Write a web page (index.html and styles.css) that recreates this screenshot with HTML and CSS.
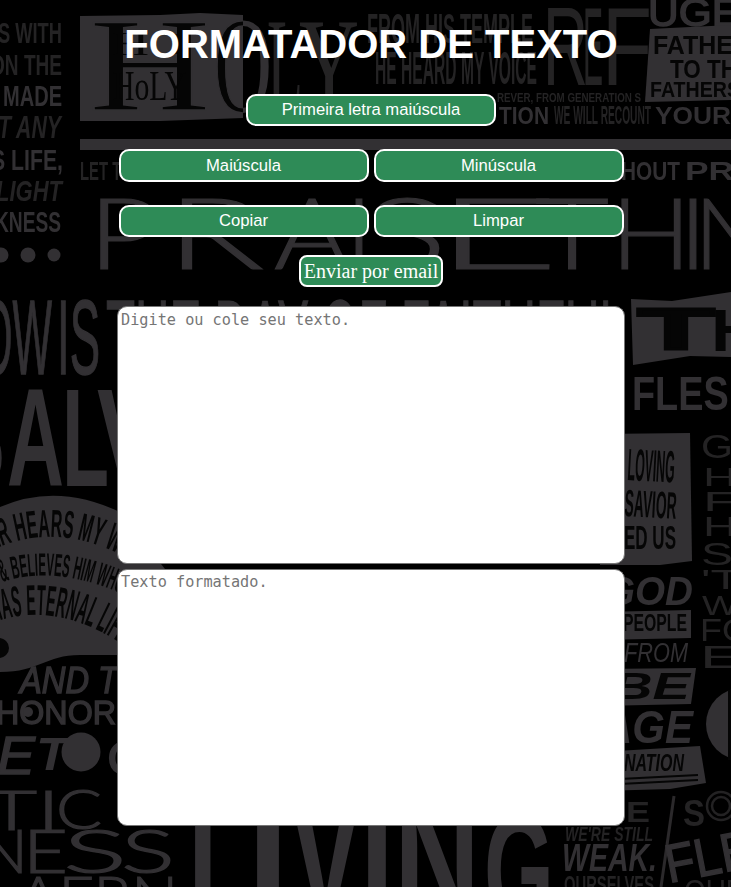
FILE: index.html
```html
<!DOCTYPE html>
<html lang="pt-BR">
<head>
<meta charset="utf-8">
<title>Formatador de texto</title>
<link rel="stylesheet" href="styles.css">
</head>
<body>
<svg class="backdrop" viewBox="0 0 731 887" aria-hidden="true">
  <defs>
    <clipPath id="outside"><rect x="243" y="0" width="200" height="130"/></clipPath>
    <clipPath id="inside"><rect x="80" y="0" width="163" height="130"/></clipPath>
    <path id="arc1" d="M-8 550Q57 520 127 558"/>
    <path id="arc2" d="M2 582Q57 564 127 596"/>
    <path id="arc3" d="M-6 622Q57 600 125 646"/>
  </defs>

  <!-- left column -->
  <g class="cond dim">
    <text x="-2" y="43" font-size="29" textLength="64" lengthAdjust="spacingAndGlyphs">S WITH</text>
    <text x="-10" y="75" font-size="30" textLength="72" lengthAdjust="spacingAndGlyphs">ON THE</text>
    <text x="-2" y="138" font-size="31" textLength="63" lengthAdjust="spacingAndGlyphs" font-style="italic">T ANY</text>
    <text x="-4" y="201" font-size="30" textLength="66" lengthAdjust="spacingAndGlyphs" font-style="italic">LIGHT</text>
    <text x="80" y="180" font-size="26" textLength="52" lengthAdjust="spacingAndGlyphs">LET TH</text>
  </g>
  <g class="cond">
    <text x="3" y="106" font-size="30" textLength="59" lengthAdjust="spacingAndGlyphs">MADE</text>
    <text x="-9" y="170" font-size="30" textLength="72" lengthAdjust="spacingAndGlyphs">S LIFE,</text>
    <text x="-5" y="232" font-size="30" textLength="66" lengthAdjust="spacingAndGlyphs">KNESS</text>
  </g>
  <circle cx="1" cy="255" r="7.5"/><circle cx="28" cy="255" r="7.5"/><circle cx="54" cy="255" r="6.5"/>

  <!-- holy panel -->
  <path d="M80 16L160 15L200 13L243 15V118L160 121H80Z"/>
  <g class="serif ink" clip-path="url(#inside)">
    <text class="slim" x="89" y="110" font-size="133" textLength="122" lengthAdjust="spacingAndGlyphs">H</text>
    <text class="slim" x="214" y="112" font-size="137" textLength="58" lengthAdjust="spacingAndGlyphs">O</text>
    <text x="112" y="55" font-size="33" textLength="74" lengthAdjust="spacingAndGlyphs">HO</text>
    <text x="113" y="100" font-size="42" textLength="73" lengthAdjust="spacingAndGlyphs">HoLY</text>
  </g>
  <g class="serif" clip-path="url(#outside)">
    <text x="214" y="112" font-size="137" textLength="58" lengthAdjust="spacingAndGlyphs">O</text>
    <text class="dim" x="267" y="110" font-size="133" textLength="36" lengthAdjust="spacingAndGlyphs">L</text>
    <text class="dim" x="299" y="110" font-size="133" textLength="60" lengthAdjust="spacingAndGlyphs">Y</text>
  </g>

  <!-- top right -->
  <g class="cond dim">
    <text x="367" y="43" font-size="43" textLength="166" lengthAdjust="spacingAndGlyphs">FROM HIS TEMPLE</text>
    <text x="375" y="84" font-size="47" textLength="162" lengthAdjust="spacingAndGlyphs">HE HEARD MY VOICE</text>
    <text x="497" y="102" font-size="13" textLength="144" lengthAdjust="spacingAndGlyphs">REVER, FROM GENERATION S</text>
    <text x="554" y="124" font-size="25" textLength="97" lengthAdjust="spacingAndGlyphs">WE WILL RECOUNT</text>
  </g>
  <g class="sans dim">
    <text x="543" y="85" font-size="111" textLength="45" lengthAdjust="spacingAndGlyphs">R</text>
    <text x="583" y="85" font-size="111" textLength="20" lengthAdjust="spacingAndGlyphs">E</text>
    <text x="602" y="85" font-size="111" textLength="50" lengthAdjust="spacingAndGlyphs">F</text>
  </g>
  <text class="sans bold" x="648" y="26" font-size="38" textLength="92" lengthAdjust="spacingAndGlyphs">UGE</text>
  <g class="cond">
    <text x="499" y="124" font-size="24" textLength="50" lengthAdjust="spacingAndGlyphs">TION</text>
    <text x="655" y="124" font-size="24" textLength="76" lengthAdjust="spacingAndGlyphs">YOUR</text>
    <text x="621" y="180" font-size="25" textLength="59" lengthAdjust="spacingAndGlyphs">HOUT</text>
    <text x="685" y="180" font-size="25" textLength="49" lengthAdjust="spacingAndGlyphs">PR</text>
  </g>
  <path d="M650 29L731 25V100L645 102Z"/>
  <g class="cond ink">
    <text x="653" y="54" font-size="26" textLength="98" lengthAdjust="spacingAndGlyphs">FATHER</text>
    <text x="670" y="78" font-size="25" textLength="82" lengthAdjust="spacingAndGlyphs">TO THE</text>
    <text x="650" y="97" font-size="22" textLength="90" lengthAdjust="spacingAndGlyphs">FATHERS</text>
  </g>
  <rect x="80" y="139" width="651" height="11"/>

  <g class="thin">
    <text x="88" y="269" font-size="98" textLength="72" lengthAdjust="spacingAndGlyphs">P</text>
    <text x="166" y="269" font-size="98" textLength="98" lengthAdjust="spacingAndGlyphs">R</text>
    <text x="274" y="269" font-size="98" textLength="76" lengthAdjust="spacingAndGlyphs">A</text>
    <text x="345" y="269" font-size="98" textLength="28" lengthAdjust="spacingAndGlyphs">I</text>
    <text x="363" y="269" font-size="98" textLength="84" lengthAdjust="spacingAndGlyphs">S</text>
    <text x="435" y="269" font-size="98" textLength="124" lengthAdjust="spacingAndGlyphs">E</text>
    <text x="535" y="269" font-size="98" textLength="74" lengthAdjust="spacingAndGlyphs">T</text>
    <text x="611" y="269" font-size="98" textLength="80" lengthAdjust="spacingAndGlyphs">H</text>
    <text x="679" y="269" font-size="98" textLength="28" lengthAdjust="spacingAndGlyphs">I</text>
    <text x="694" y="269" font-size="98" textLength="75" lengthAdjust="spacingAndGlyphs">N</text>
  </g>

  <!-- middle left -->
  <g class="sans bold">
    <text x="-20" y="374" font-size="105" textLength="72" lengthAdjust="spacingAndGlyphs">OW</text>
    <text x="57" y="374" font-size="105" textLength="43" lengthAdjust="spacingAndGlyphs">IS</text>
    <text x="106" y="374" font-size="105" textLength="520" lengthAdjust="spacingAndGlyphs">THE DAY OF FAITHFUL</text>
  </g>
  <g class="cond">
    <text x="-52" y="486" font-size="140" textLength="57" lengthAdjust="spacingAndGlyphs">S</text>
    <text x="7" y="486" font-size="140" textLength="57" lengthAdjust="spacingAndGlyphs">A</text>
    <text x="62" y="486" font-size="140" textLength="47" lengthAdjust="spacingAndGlyphs">L</text>
    <text x="97" y="486" font-size="140" textLength="62" lengthAdjust="spacingAndGlyphs">V</text>
  </g>
  <path d="M0 507Q57 482 120 512L165 569V655H80C45 655 40 672 0 672Z"/>
  <circle class="ink" cx="-1" cy="648" r="10"/>
  <g class="cond ink">
    <text font-size="39"><textPath href="#arc1" textLength="130" lengthAdjust="spacingAndGlyphs">ER HEARS MY W</textPath></text>
    <text font-size="32"><textPath href="#arc2" textLength="122" lengthAdjust="spacingAndGlyphs">&amp; BELIEVES HIM WHO</textPath></text>
    <text font-size="43"><textPath href="#arc3" textLength="134" lengthAdjust="spacingAndGlyphs">HAS ETERNAL LIFE</textPath></text>
  </g>
  <g class="sans bold">
    <text x="20" y="693" font-size="36" textLength="98" lengthAdjust="spacingAndGlyphs" font-style="italic">AND T</text>
    <text x="-4" y="724" font-size="33" textLength="120" lengthAdjust="spacingAndGlyphs">HONOR</text>
    <text x="-3" y="774" font-size="54" textLength="38" lengthAdjust="spacingAndGlyphs" font-style="italic">E</text>
    <text x="107" y="775" font-size="48" textLength="38" lengthAdjust="spacingAndGlyphs">C</text>
  </g>
  <text class="cond" x="36" y="770" font-size="46" textLength="32" lengthAdjust="spacingAndGlyphs" font-style="italic">T</text>
  <circle cx="28" cy="712" r="5"/>
  <circle cx="81" cy="752" r="19.5"/>
  <g class="thin">
    <text x="-14" y="830" font-size="56" textLength="74" lengthAdjust="spacingAndGlyphs">TI</text>
    <text x="56" y="829" font-size="56" textLength="46" lengthAdjust="spacingAndGlyphs">C</text>
    <text x="-22" y="873" font-size="61" textLength="50" lengthAdjust="spacingAndGlyphs">N</text>
    <text x="23" y="873" font-size="61" textLength="45" lengthAdjust="spacingAndGlyphs">E</text>
    <text x="63" y="873" font-size="61" textLength="64" lengthAdjust="spacingAndGlyphs">S</text>
    <text x="121" y="873" font-size="61" textLength="54" lengthAdjust="spacingAndGlyphs">S</text>
    <text x="18" y="918" font-size="58" textLength="160" lengthAdjust="spacingAndGlyphs">AFRN</text>
  </g>

  <!-- middle right -->
  <path d="M631 299L672 301L731 292V357L690 356L633 365Z"/>
  <text class="cond ink" x="638" y="349" font-size="58" textLength="76" lengthAdjust="spacingAndGlyphs" stroke="#050505" stroke-width="3">T</text>
  <text class="cond ink" x="711" y="351" font-size="60" textLength="50" lengthAdjust="spacingAndGlyphs">H</text>
  <text class="cond" x="632" y="410" font-size="49" textLength="124" lengthAdjust="spacingAndGlyphs">FLESH</text>
  <path d="M600 434L690 433L692 561L660 565H600Z"/>
  <g class="cond ink">
    <text x="627" y="480" font-size="45" textLength="47" lengthAdjust="spacingAndGlyphs" transform="rotate(3 627 480)">LOVING</text>
    <text x="624" y="516" font-size="38" textLength="52" lengthAdjust="spacingAndGlyphs" transform="rotate(3 624 516)">SAVIOR</text>
    <text x="624" y="549" font-size="33" textLength="52" lengthAdjust="spacingAndGlyphs">ED US</text>
  </g>
  <g class="sans dim">
    <text x="701" y="458" font-size="33" textLength="32" lengthAdjust="spacingAndGlyphs">G</text>
    <text x="703" y="486" font-size="26" textLength="34" lengthAdjust="spacingAndGlyphs">H</text>
    <text x="703" y="511" font-size="28" textLength="34" lengthAdjust="spacingAndGlyphs">F</text>
    <text x="703" y="536" font-size="28" textLength="34" lengthAdjust="spacingAndGlyphs">H</text>
    <text x="701" y="565" font-size="31" textLength="32" lengthAdjust="spacingAndGlyphs">S</text>
    <text x="701" y="589" font-size="27" textLength="40" lengthAdjust="spacingAndGlyphs">'T</text>
    <text x="702" y="615" font-size="28" textLength="36" lengthAdjust="spacingAndGlyphs">W</text>
    <text x="700" y="641" font-size="31" textLength="50" lengthAdjust="spacingAndGlyphs">FO</text>
    <text x="700" y="668" font-size="31" textLength="42" lengthAdjust="spacingAndGlyphs">E</text>
  </g>

  <text class="cond" x="605" y="605" font-size="40" textLength="88" lengthAdjust="spacingAndGlyphs" font-style="italic">GOD</text>
  <path d="M600 612L691 610V638L600 640Z"/>
  <text class="cond ink" x="623" y="631" font-size="23" textLength="64" lengthAdjust="spacingAndGlyphs">PEOPLE</text>
  <text class="sans" x="624" y="662" font-size="27" textLength="64" lengthAdjust="spacingAndGlyphs" font-style="italic">FROM</text>
  <path d="M600 669L696 668L691 704L600 706Z"/>
  <text class="cond ink" x="612" y="699" font-size="36" textLength="78" lengthAdjust="spacingAndGlyphs" font-style="italic">BE</text>
  <text class="cond" x="602" y="743" font-size="46" textLength="91" lengthAdjust="spacingAndGlyphs" font-style="italic">AGE</text>
  <path d="M600 752L700 746L706 783L670 789L600 791Z"/>
  <text class="cond ink" x="624" y="771" font-size="24" textLength="60" lengthAdjust="spacingAndGlyphs" font-style="italic">NATION</text>
  <path class="rule" d="M600 780L698 775M600 785L698 780"/>
  <circle cx="742" cy="724" r="36"/>
  <rect class="ink" x="728" y="690" width="4" height="70"/>

  <!-- bottom -->
  <g class="cond">
    <text x="188" y="920" font-size="180" textLength="65" lengthAdjust="spacingAndGlyphs">L</text>
    <text x="247" y="920" font-size="180" textLength="42" lengthAdjust="spacingAndGlyphs">I</text>
    <text x="290" y="920" font-size="180" textLength="71" lengthAdjust="spacingAndGlyphs">V</text>
    <text x="360" y="920" font-size="180" textLength="34" lengthAdjust="spacingAndGlyphs">I</text>
    <text x="394" y="920" font-size="180" textLength="86" lengthAdjust="spacingAndGlyphs">N</text>
    <text x="484" y="925" font-size="160" textLength="70" lengthAdjust="spacingAndGlyphs">G</text>
    <text x="562" y="871" font-size="39" textLength="95" lengthAdjust="spacingAndGlyphs" font-style="italic">WEAK.</text>
  </g>
  <g class="cond dim">
    <text x="626" y="822" font-size="30" textLength="24" lengthAdjust="spacingAndGlyphs">E</text>
    <text x="565" y="841" font-size="21" textLength="88" lengthAdjust="spacingAndGlyphs" font-style="italic">WE'RE STILL</text>
    <text x="564" y="893" font-size="24" textLength="90" lengthAdjust="spacingAndGlyphs">OURSELVES</text>
    <text x="683" y="826" font-size="36" textLength="22" lengthAdjust="spacingAndGlyphs">S</text>
  </g>
  <circle class="ring" cx="721" cy="806" r="14"/><circle class="ring" cx="721" cy="806" r="9"/>
  <path class="line" d="M674 796L661 887"/>
  <g class="sans">
    <text class="bold" x="669" y="883" font-size="54" textLength="88" lengthAdjust="spacingAndGlyphs" transform="rotate(-11 669 883)">FLE</text>
    <text class="dim" x="684" y="902" font-size="32" textLength="62" lengthAdjust="spacingAndGlyphs">OUR</text>
  </g>
</svg>

<main class="page">
  <h1>FORMATADOR DE TEXTO</h1>
  <div class="row"><button class="btn">Primeira letra maiúscula</button></div>
  <div class="row tall"><button class="btn">Maiúscula</button><button class="btn">Minúscula</button></div>
  <div class="row"><button class="btn">Copiar</button><button class="btn">Limpar</button></div>
  <a class="email">Enviar por email</a>
  <textarea class="box" placeholder="Digite ou cole seu texto."></textarea>
  <textarea class="box result" placeholder="Texto formatado."></textarea>
</main>
</body>
</html>
```
FILE: styles.css
```css
* { box-sizing: border-box; }

body {
  margin: 0;
  height: 887px;
  overflow: hidden;
  background: #000;
}

.backdrop {
  position: absolute;
  inset: 0;
  width: 731px;
  height: 887px;
  fill: #323033;
  filter: blur(0.7px);
}
.cond { font-family: "Liberation Sans", Arial, sans-serif; font-weight: 700; }
.sans { font-family: "Liberation Sans", Arial, sans-serif; }
.serif { font-family: "Liberation Serif", "Times New Roman", serif; }
.thin {
  font-family: Lato, "Open Sans", sans-serif;
  font-weight: 300;
  stroke: #323033;
  stroke-width: 1.2;
}
.bold { stroke: #323033; stroke-width: 1.4; }
.slim { stroke: #323033; stroke-width: 1.6; }
.dim { fill: #242324; }
.ink { fill: #050505; }
.rule { stroke: #050505; stroke-width: 2; }
.ring { fill: none; stroke: #232223; stroke-width: 2.5; }
.line { stroke: #2b292b; stroke-width: 3; }

.page {
  position: relative;
  display: flex;
  flex-direction: column;
  align-items: center;
  width: 731px;
  padding: 21px 0 0 11px;
}

h1 {
  margin: 0 0 27px;
  font: 700 40px/46px "Liberation Sans", Arial, sans-serif;
  color: #fff;
}

.row {
  display: flex;
  gap: 5px;
  height: 32px;
  margin-bottom: 23px;
}
.row.tall { height: 33px; }

.btn {
  width: 250px;
  height: 100%;
  padding: 0;
  border: 2px solid #fff;
  border-radius: 10px;
  background: #2e8b57;
  color: #fff;
  font: 16.67px "Liberation Sans", Arial, sans-serif;
}

.email {
  height: 32px;
  margin: -5px 0 19px;
  padding: 0 3px;
  border: 2px solid #fff;
  border-radius: 8px;
  background: #2e8b57;
  color: #fff;
  font: 20px/29px "Liberation Serif", "Times New Roman", serif;
}

.box {
  display: block;
  width: 508px;
  height: 258px;
  margin: 0 0 5px;
  padding: 4px 3px;
  border: 1px solid #767676;
  border-radius: 10px;
  background: #fff;
  resize: none;
  font: 15.23px/18px "DejaVu Sans Mono", monospace;
}
.box.result { height: 257px; padding-top: 3px; }
.box::placeholder { color: #757575; }
```
